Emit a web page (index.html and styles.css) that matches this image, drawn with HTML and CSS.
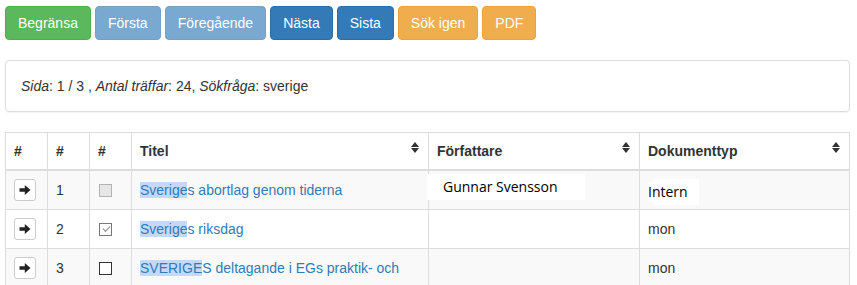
FILE: index.html
```html
<!DOCTYPE html>
<html lang="sv">
<head>
    <meta charset="UTF-8">
    <title>Sökresultat</title>
    <link rel="stylesheet" href="styles.css">
</head>
<body>
    <div class="toolbar">
        <button class="btn btn-success">Begränsa</button>
        <button class="btn btn-primary" disabled>Första</button>
        <button class="btn btn-primary" disabled>Föregående</button>
        <button class="btn btn-primary">Nästa</button>
        <button class="btn btn-primary">Sista</button>
        <button class="btn btn-warning">Sök igen</button>
        <button class="btn btn-warning">PDF</button>
    </div>
    <div class="panel">
        <em>Sida</em>: 1 / 3 , <em>Antal träffar</em>: 24, <em>Sökfråga</em>: sverige
    </div>
    <table class="results">
        <colgroup>
            <col class="c-go"><col class="c-num"><col class="c-chk"><col class="c-title"><col class="c-author"><col class="c-type">
        </colgroup>
        <thead>
            <tr>
                <th>#</th>
                <th>#</th>
                <th>#</th>
                <th class="sortable">Titel <span class="sort"></span></th>
                <th class="sortable">Författare <span class="sort"></span></th>
                <th class="sortable">Dokumenttyp <span class="sort"></span></th>
            </tr>
        </thead>
        <tbody>
            <tr>
                <td><button class="btn-xs"><svg viewBox="0 0 12 12" width="12" height="12"><path d="M0.5 4.3h5.3V1L11.5 6l-5.7 5V7.7H0.5z"/></svg></button></td>
                <td>1</td>
                <td><span class="box disabled"></span></td>
                <td><a href="#"><mark>Sverige</mark>s abortlag genom tiderna</a></td>
                <td><span class="patch patch-author">Gunnar Svensson</span></td>
                <td><span class="patch patch-type">Intern</span></td>
            </tr>
            <tr>
                <td><button class="btn-xs"><svg viewBox="0 0 12 12" width="12" height="12"><path d="M0.5 4.3h5.3V1L11.5 6l-5.7 5V7.7H0.5z"/></svg></button></td>
                <td>2</td>
                <td><span class="box checked"></span></td>
                <td><a href="#"><mark>Sverige</mark>s riksdag</a></td>
                <td></td>
                <td>mon</td>
            </tr>
            <tr>
                <td><button class="btn-xs"><svg viewBox="0 0 12 12" width="12" height="12"><path d="M0.5 4.3h5.3V1L11.5 6l-5.7 5V7.7H0.5z"/></svg></button></td>
                <td>3</td>
                <td><span class="box"></span></td>
                <td><a href="#"><mark>SVERIGE</mark>S deltagande i EGs praktik- och</a></td>
                <td></td>
                <td>mon</td>
            </tr>
        </tbody>
    </table>
</body>
</html>
```

FILE: styles.css
```css
html {
    font-family: 'Liberation Sans', Arial, sans-serif;
    font-size: 14px;
    color: #333;
}
body {
    margin: 0;
    padding: 6px 7px 0 5px;
    line-height: 20px;
}
.toolbar {
    display: flex;
    gap: 4px;
}
.btn {
    font-family: inherit;
    font-size: 14px;
    line-height: 20px;
    padding: 6px 12px;
    border: 1px solid transparent;
    border-radius: 4px;
    color: #fff;
}
.btn-success {
    background: #5cb85c;
    border-color: #4cae4c;
}
.btn-primary {
    background: #337ab7;
    border-color: #2e6da4;
}
.btn-primary:disabled {
    opacity: .65;
}
.btn-warning {
    background: #f0ad4e;
    border-color: #eea236;
}
.panel {
    margin: 20px 0;
    padding: 15px;
    border: 1px solid #ddd;
    border-radius: 4px;
    box-shadow: 0 1px 1px rgba(0, 0, 0, .05);
}
.results {
    width: 100%;
    border-collapse: collapse;
}
.c-go, .c-num, .c-chk { width: 42px; }
.c-title { width: 297px; }
.c-author { width: 211px; }
th, td {
    border: 1px solid #ddd;
    padding: 8px;
    text-align: left;
    vertical-align: middle;
}
th {
    font-weight: bold;
    border-bottom-width: 2px;
}
.sortable {
    position: relative;
}
.sort {
    position: absolute;
    right: 9px;
    top: 9px;
    width: 8px;
    height: 11px;
}
.sort::before, .sort::after {
    content: "";
    position: absolute;
    left: 0;
    border-left: 4px solid transparent;
    border-right: 4px solid transparent;
}
.sort::before {
    top: 0;
    border-bottom: 5px solid #333;
}
.sort::after {
    bottom: 0;
    border-top: 5px solid #333;
}
tbody tr:nth-child(odd) {
    background: #f9f9f9;
}
.btn-xs {
    display: flex;
    align-items: center;
    justify-content: center;
    padding: 0;
    width: 22px;
    height: 22px;
    background: #fff;
    border: 1px solid #ccc;
    border-radius: 3px;
    fill: #222;
}
.box {
    display: block;
    width: 11px;
    height: 11px;
    margin-left: 1px;
    border: 1px solid #333;
    background: #fff;
}
.box.disabled {
    border-color: #b3b3b3;
    background: #e6e6e6;
}
.box.checked {
    border-color: #777;
    position: relative;
}
.box.checked::after {
    content: "";
    position: absolute;
    left: 3px;
    top: 2px;
    width: 6px;
    height: 3px;
    border-left: 1px solid #888;
    border-bottom: 1px solid #888;
    transform: rotate(-45deg);
}
a {
    color: #337ab7;
    text-decoration: none;
}
mark {
    background: #c3d9f7;
    color: inherit;
}
/* white retouch patches in the original screenshot */
.patch {
    display: inline-block;
    line-height: 20px;
    background: #fff;
    color: #000;
    font-family: 'Open Sans', sans-serif;
    font-size: 14px;
}
.patch-author {
    position: relative;
    top: -3px;
    margin-left: 6px;
    box-shadow: -13px 0 0 3px #fff, 24px 0 0 3px #fff;
}
.patch-type {
    position: relative;
    top: 2px;
    box-shadow: 8px 0 0 3px #fff;
}
```
